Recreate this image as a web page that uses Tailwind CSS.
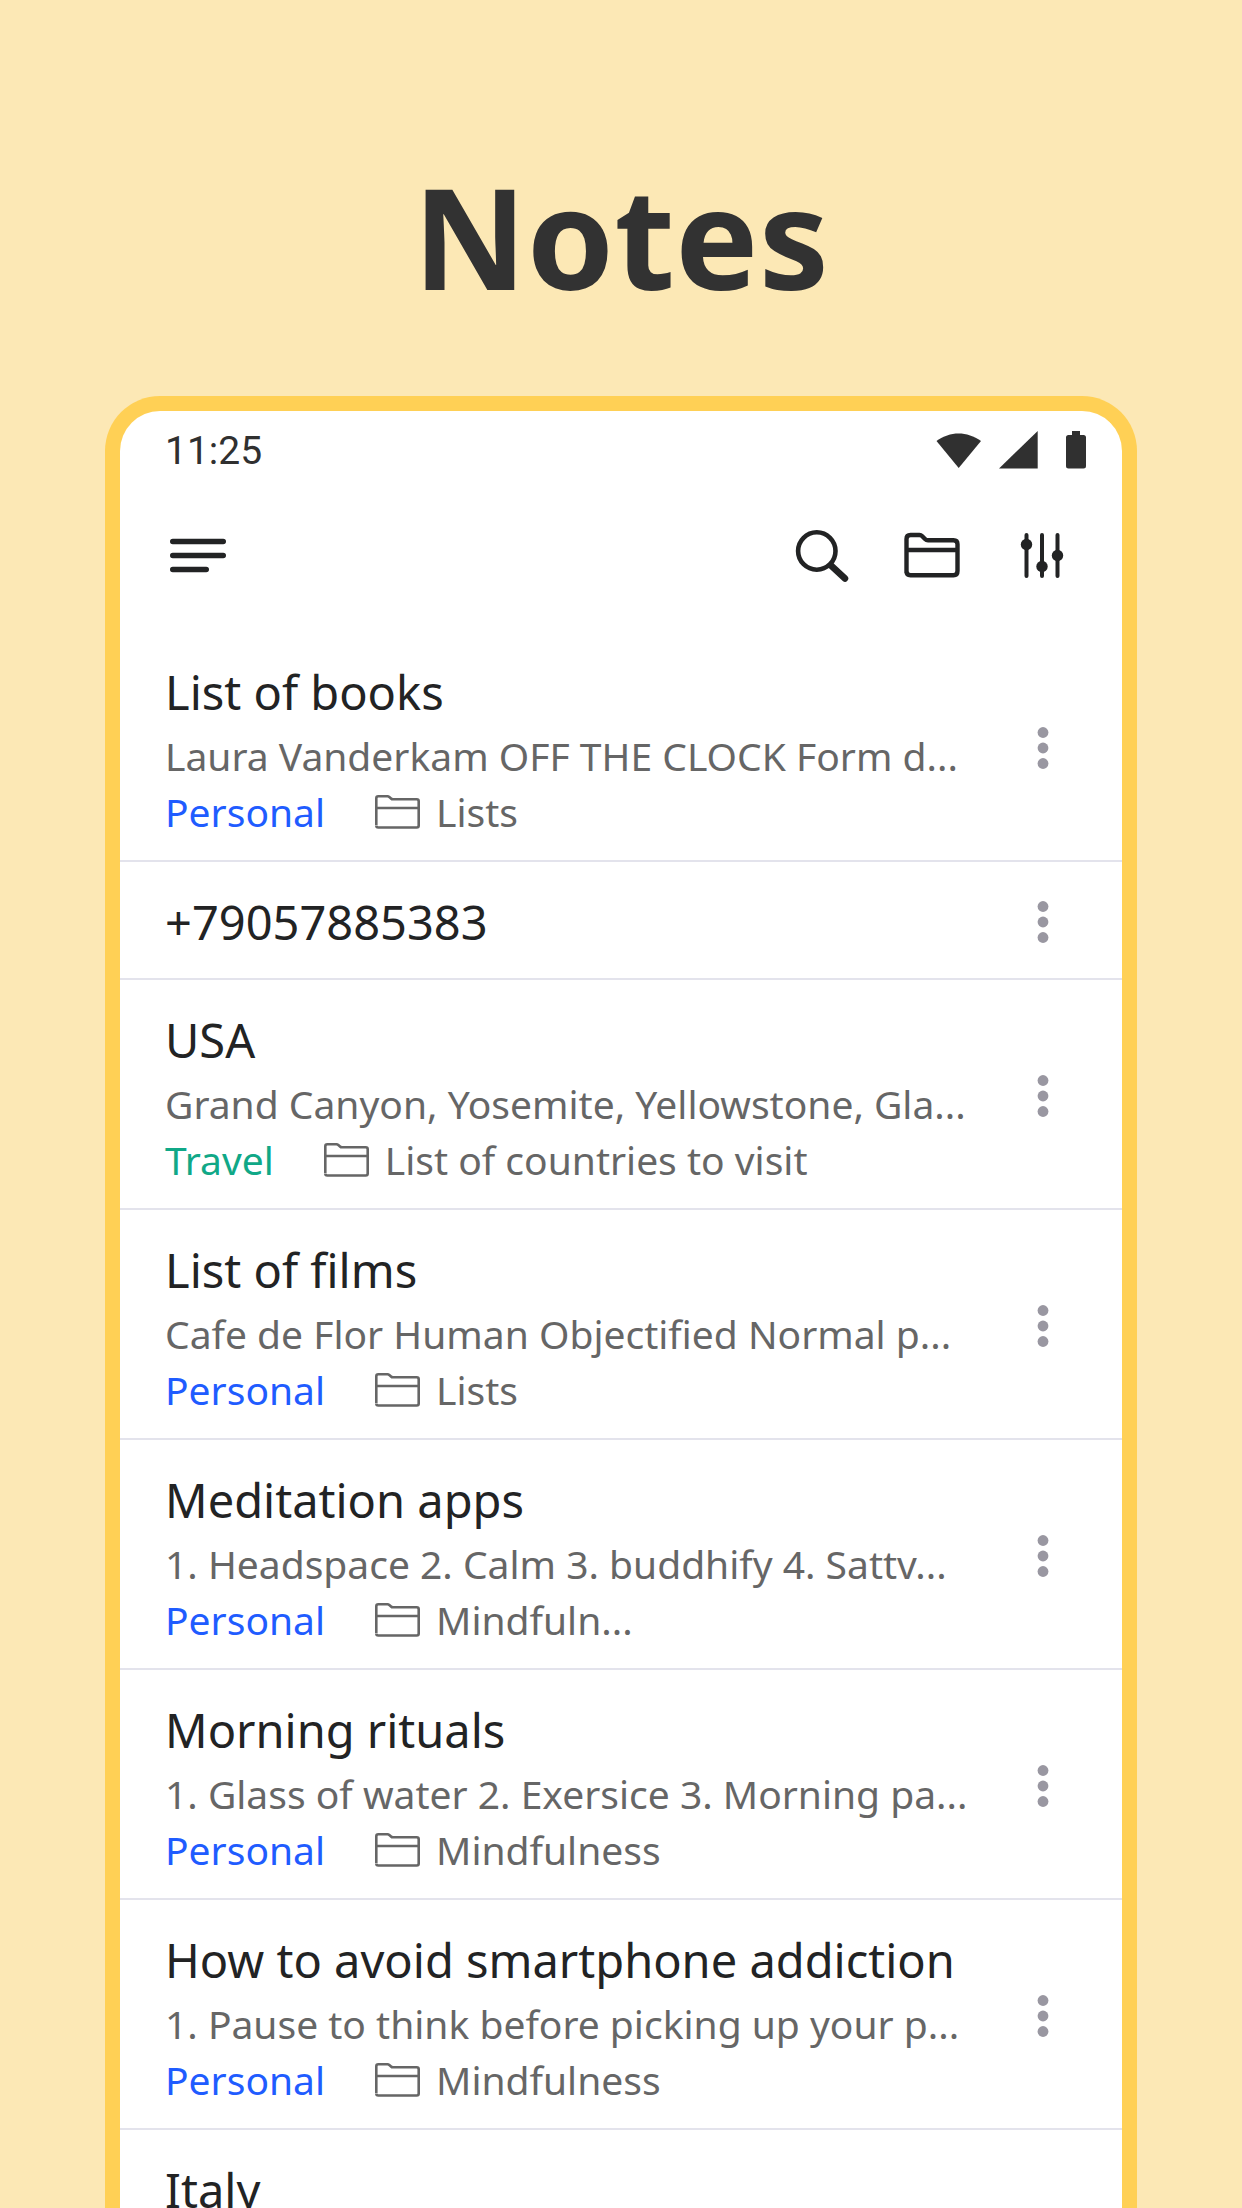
<!DOCTYPE html>
<html lang="en">
<head>
  <meta charset="UTF-8">
  <meta name="viewport" content="width=device-width, initial-scale=1.0">
  <title>Notes</title>
  <script src="https://cdn.jsdelivr.net/npm/@tailwindcss/browser@4"></script>
</head>
<body class="h-screen overflow-hidden bg-[#fce8b5] font-['Noto_Sans',sans-serif] text-[#222324]">
  <div class="flex h-full flex-col">
    <h1 class="pt-[140px] text-center text-[140px] leading-[192px] font-bold text-[#323232]">Notes</h1>

    <!-- Phone -->
    <div class="mx-[105px] mt-16 flex-1 overflow-hidden rounded-t-[55px] border-x-[15px] border-t-[15px] border-[#ffd055] bg-white">
      <!-- Status bar -->
      <div class="flex h-[78px] items-center justify-between pr-[36px] pl-[45px] text-[#303030]">
        <span class="pt-0.5 font-['Roboto',sans-serif] text-[39px] leading-[48px]">11:25</span>
        <div class="flex items-center gap-[18px]">
          <svg class="h-[38px] w-[45px]" viewBox="0 0 45 38" fill="currentColor"><path d="M0.500 10C14 0 31 0 45 10L22.700 37Z"/></svg>
          <svg class="h-[38px] w-[39px]" viewBox="0 0 39 38" fill="currentColor"><path d="M0 37.500L38.700 0V37.500Z"/></svg>
          <svg class="ml-[10px] h-[38px] w-5" viewBox="0 0 20 38" fill="currentColor"><path d="M6 0H14V4H17.500Q20 4 20 6.500V35Q20 37.500 17.500 37.500H2.500Q0 37.500 0 35V6.500Q0 4 2.500 4H6Z"/></svg>
        </div>
      </div>

      <!-- Toolbar -->
      <header class="flex h-[132px] items-center justify-between pr-[52px] pl-[50px]">
        <button type="button" aria-label="Menu">
          <svg class="size-14" viewBox="0 0 56 56" fill="none" stroke="currentColor" stroke-width="5.600" stroke-linecap="round"><path d="M2.800 14.500H53.200M2.800 28.500H53.200M2.800 42.500H36.200"/></svg>
        </button>
        <div class="flex items-center gap-[54px]">
          <button type="button" aria-label="Search">
            <svg class="size-14" viewBox="0 0 56 56" fill="none" stroke="currentColor"><circle cx="22.800" cy="24" r="18.700" stroke-width="4.600"/><path d="M37 38.500L51 51.500" stroke-width="6.500" stroke-linecap="round"/></svg>
          </button>
          <button type="button" aria-label="Folders">
            <svg class="size-14" viewBox="0 0 56 56" fill="none" stroke="currentColor" stroke-width="4.400"><path d="M2.500 46V12Q2.500 8 6.500 8H15.500Q17 8 18 9L21 12Q22.300 13.300 24 13.300H49.500Q53.500 13.300 53.500 17.300V44Q53.500 48.300 49.500 48.300H6.500Q2.500 48.300 2.500 44M2.500 23H53.500"/></svg>
          </button>
          <button type="button" aria-label="Filters">
            <svg class="size-14" viewBox="0 0 56 56" fill="currentColor" stroke="currentColor" stroke-width="4" stroke-linecap="round"><path d="M12.500 8V49M28 8V49M43.500 8V49"/><g stroke="none"><circle cx="12.500" cy="17.500" r="5.700"/><circle cx="28" cy="39.500" r="5.700"/><circle cx="43.500" cy="28.500" r="5.700"/></g></svg>
          </button>
        </div>
      </header>

      <!-- Notes list -->
      <ul id="notesList" class="mt-[11px]"></ul>
    </div>
  </div>

  <script>
    const notes = [
      { title: "List of books", preview: "Laura Vanderkam OFF THE CLOCK Form d...", tag: "Personal", folder: "Lists" },
      { title: "+79057885383" },
      { title: "USA", preview: "Grand Canyon, Yosemite, Yellowstone, Gla...", tag: "Travel", folder: "List of countries to visit" },
      { title: "List of films", preview: "Cafe de Flor Human Objectified Normal p...", tag: "Personal", folder: "Lists" },
      { title: "Meditation apps", preview: "1. Headspace 2. Calm 3. buddhify 4. Sattv...", tag: "Personal", folder: "Mindfuln..." },
      { title: "Morning rituals", preview: "1. Glass of water 2. Exersice 3. Morning pa...", tag: "Personal", folder: "Mindfulness" },
      { title: "How to avoid smartphone addiction", preview: "1. Pause to think before picking up your p...", tag: "Personal", folder: "Mindfulness" },
      { title: "Italy" },
    ];

    const tagColors = {
      Personal: "text-[#1f5cff]",
      Travel: "text-[#10a887]",
    };

    const notesList = document.getElementById("notesList");

    notes.forEach(note => {
      const item = document.createElement("li");
      item.className = "flex border-b-2 border-[#e3e3ec] pl-[45px] last:min-h-[230px]";

      const details = note.preview ? `
        <p class="text-[39px] leading-[56px] whitespace-nowrap text-[#666666]">${note.preview}</p>
        <div class="flex items-center text-[39px] leading-[56px] text-[#666666]">
          <a href="#" class="${tagColors[note.tag]}">${note.tag}</a>
          <svg class="mr-4 ml-[50px] h-[34px] w-[45px]" viewBox="0 0 45 34" fill="none" stroke="currentColor" stroke-width="2.600"><path d="M1.300 30V3.300Q1.300 1.300 3.300 1.300H12.500Q13.500 1.300 14.300 2L16 3.500Q16.800 4.300 18 4.300H41.700Q43.700 4.300 43.700 6.300V30.500Q43.700 32.500 41.700 32.500H3.300Q1.300 32.500 1.300 30.500M1.300 13H43.700"/></svg>
          <span>${note.folder}</span>
        </div>` : "";

      item.innerHTML = `
        <div class="min-w-0 flex-1 pt-7 pb-5">
          <h2 class="mb-1 text-[47px] leading-[64px] whitespace-nowrap">${note.title}</h2>${details}
        </div>
        <button type="button" aria-label="More" class="flex w-[158px] items-center justify-center pt-1">
          <svg class="h-[42px] w-3" viewBox="0 0 12 42" fill="#9997a1"><circle cx="6" cy="5.500" r="5.400"/><circle cx="6" cy="21" r="5.400"/><circle cx="6" cy="36.500" r="5.400"/></svg>
        </button>
      `;
      notesList.appendChild(item);
    });
  </script>
</body>
</html>
